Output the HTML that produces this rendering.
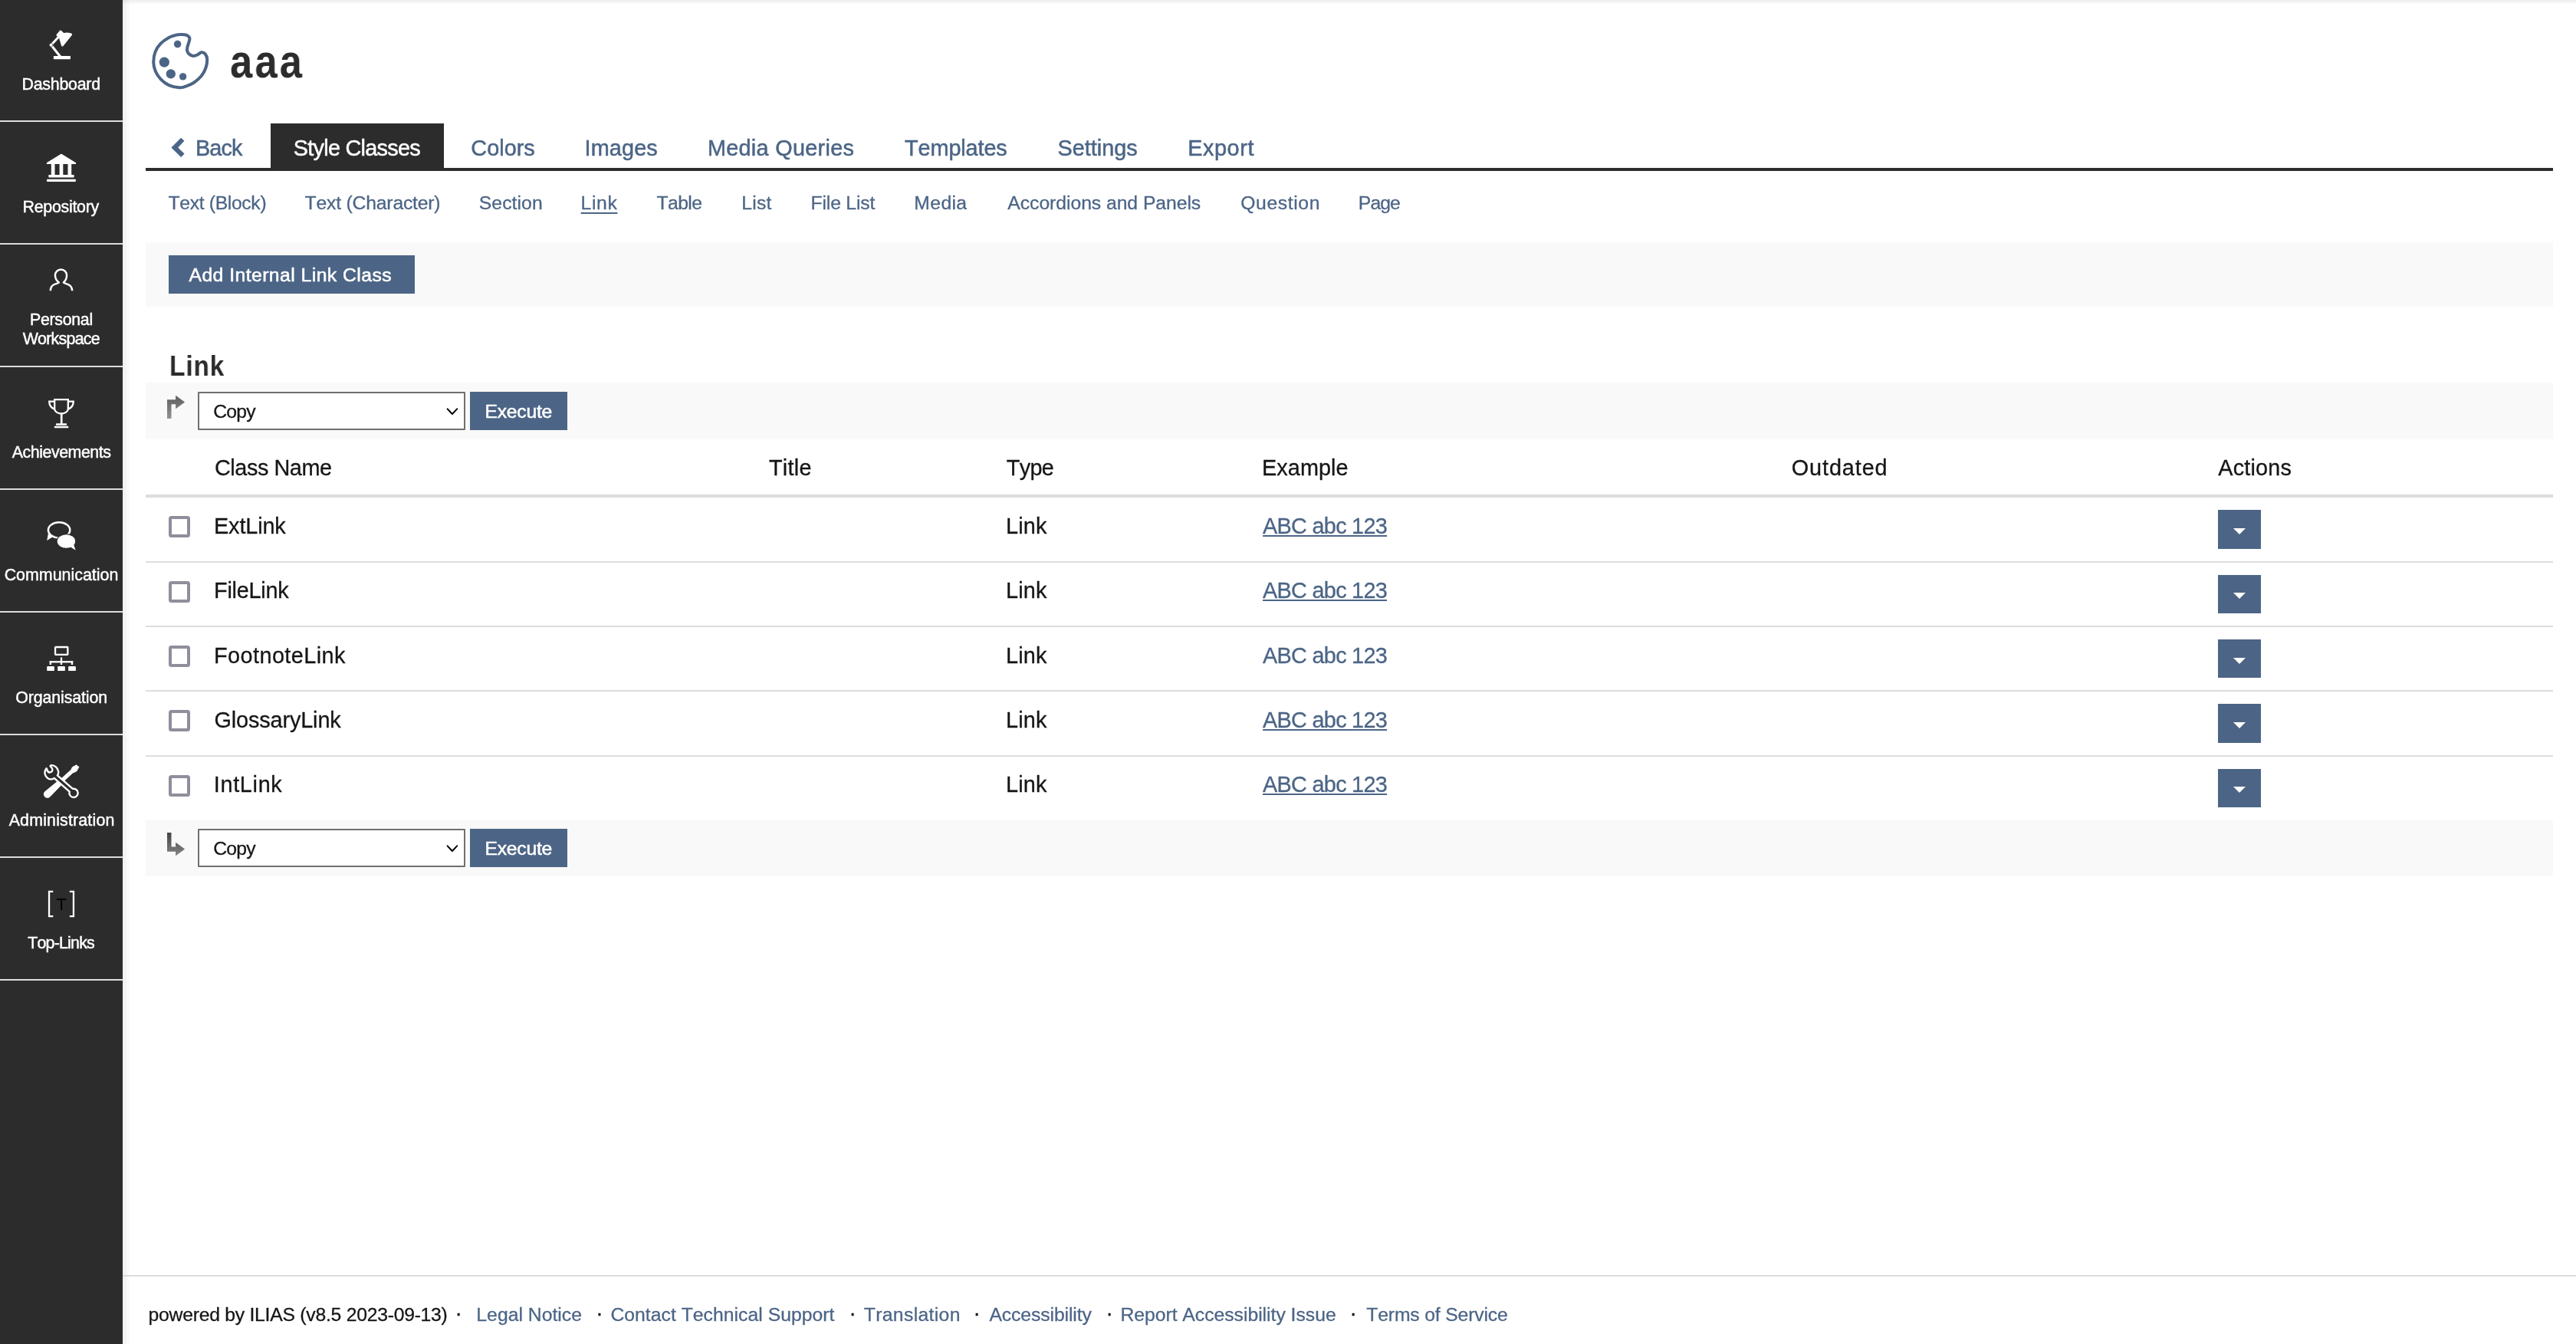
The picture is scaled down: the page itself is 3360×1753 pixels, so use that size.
<!DOCTYPE html>
<html lang="en">
<head>
<meta charset="utf-8">
<title>aaa – Style Classes – Link</title>
<style>
*{box-sizing:border-box;margin:0;padding:0}
html,body{width:3360px;height:1753px;overflow:hidden;background:#fff}
body{position:relative;font-family:"Liberation Sans",sans-serif;font-kerning:none;font-variant-ligatures:none;color:#161616}
#app{position:absolute;left:0;top:0;width:3360px;height:1753px;will-change:transform}
.t{position:absolute;white-space:pre;display:block}
a.t,a{text-decoration:none}
#mainbar{position:absolute;left:0;top:0;width:160px;height:1753px;background:#2c2c2c}
#mainbar .sep{position:absolute;left:0;width:160px;height:2px;background:#dcdcdc}
#mainbar svg{position:absolute;overflow:visible}
#sideshadow{position:absolute;left:160px;top:0;width:10px;height:1753px;background:linear-gradient(to right,rgba(0,0,0,.065),rgba(0,0,0,.03) 50%,rgba(0,0,0,0))}
#topshadow{position:absolute;left:160px;top:0;width:3200px;height:6px;background:linear-gradient(to bottom,rgba(0,0,0,.07),rgba(0,0,0,0))}
#tabline{position:absolute;left:190px;top:219px;width:3140px;height:4px;background:#2c2c2c}
#tabactive{position:absolute;left:353px;top:161px;width:226px;height:60px;background:#2c2c2c}
.graybar{position:absolute;left:190px;width:3140px;background:#f9f9f9}
.btn{position:absolute;background:#4c6586}
.sel{position:absolute;background:#fff;border:2px solid #6f6f6f;border-radius:1px}
.hline{position:absolute;left:190px;width:3140px;background:#dddddd}
.cb{position:absolute;left:220px;width:28px;height:28px;border:4px solid #8f8e9c;border-radius:3.5px;background:#fff}
.act{position:absolute;left:2893px;width:56px;height:50px;background:#4c6586}
.act i{position:absolute;left:20px;top:24px;width:0;height:0;border-left:8px solid transparent;border-right:8px solid transparent;border-top:8px solid #fff}
#footline{position:absolute;left:160px;top:1663px;width:3200px;height:2px;background:#dddddd}
svg{position:absolute;overflow:visible}
</style>
</head>
<body>
<div id="app">

<!-- ======= main bar ======= -->
<nav id="mainbar">
<div class="sep" style="top:157px"></div>
<div class="sep" style="top:317px"></div>
<div class="sep" style="top:477px"></div>
<div class="sep" style="top:637px"></div>
<div class="sep" style="top:797px"></div>
<div class="sep" style="top:957px"></div>
<div class="sep" style="top:1117px"></div>
<div class="sep" style="top:1277px"></div>
<svg width="160" height="1753" viewBox="0 0 160 1753" style="left:0;top:0" aria-hidden="true">
<g fill="#fff"><path d="M78.1 39.7L73.7 45Q73 46 73.9 46.8L77 49.4L80 59.4Q81 61.6 82.7 59.7L93.9 45.7Q94.7 44.2 93 43.6Q88 41.9 83.2 43L79.7 39.8Q78.9 39.1 78.1 39.7Z"/><path d="M66.6 58.7L76.6 48" stroke="#fff" stroke-width="3" fill="none"/><path d="M66.6 58.7L79 74.2" stroke="#fff" stroke-width="3.1" fill="none"/><circle cx="66.6" cy="58.7" r="2.3" stroke="#2c2c2c" stroke-width="0.6"/><rect x="69.8" y="73" width="22.2" height="4.3" rx="0.7"/></g>
<g fill="#fff"><path d="M79.2 200.9Q79.95 200.4 80.7 200.9L98.6 212Q99.6 212.7 99.1 213.5Q98.8 214.1 98 214.1H61.9Q61.1 214.1 60.8 213.5Q60.4 212.7 61.3 212Z"/><rect x="66.8" y="213.5" width="4.7" height="15"/><rect x="77.6" y="213.5" width="4.7" height="15"/><rect x="88.5" y="213.5" width="4.7" height="15"/><rect x="63.3" y="228" width="33.4" height="3.4" rx="0.8"/><rect x="61" y="233.7" width="37.9" height="3.4" rx="0.8"/></g>
<path d="M65.8 379.2C65.9 374.5 68 371.7 72.3 370.4C74.2 369.8 76 369.4 76.8 368.5C74.4 366.6 72 363.6 71.95 359.3A7.55 7.9 0 0 1 87.05 359.3C87 363.6 85 366.6 82.9 368.5C83.7 369.4 85.4 369.8 87.3 370.4C91.6 371.7 94 374.5 94.2 379.2" fill="none" stroke="#fff" stroke-width="2.5" stroke-linecap="butt" stroke-linejoin="round"/>
<g fill="none" stroke="#fff" stroke-width="2.3"><path d="M71.2 521.2H88.8V533.2A8.8 6.3 0 0 1 71.2 533.2Z" stroke-linejoin="miter"/><path d="M71.2 523.6H64.2C64.4 528.5 66.8 532 71 533.6"/><path d="M88.8 523.6H95.8C95.6 528.5 93.2 532 89 533.6"/></g><g fill="#fff"><rect x="78.85" y="539" width="2.7" height="14"/><rect x="72.9" y="552.2" width="14.2" height="2.5" rx="0.8"/><rect x="70.8" y="555.8" width="18.5" height="2.5" rx="0.8"/></g>
<g><path d="M62.9 696L61.2 704.9L68.5 700.5Z" fill="#fff"/><ellipse cx="77.1" cy="691.3" rx="14.2" ry="10.1" fill="#2c2c2c" stroke="#fff" stroke-width="2.5"/><path d="M96 709.8L98.5 717.6L92 713.6Z" fill="#fff" stroke="#2c2c2c" stroke-width="1"/><ellipse cx="86.4" cy="706" rx="11.7" ry="8.8" fill="#fff" stroke="#2c2c2c" stroke-width="2.4" style="paint-order:stroke"/><path d="M96 709.8L98.5 717.6L92 713.6Z" fill="#fff"/></g>
<g fill="#fff"><rect x="72.05" y="844" width="16.3" height="9.8" fill="none" stroke="#fff" stroke-width="2.3" rx="0.6"/><rect x="78.85" y="857.4" width="2.3" height="9.6"/><rect x="64.7" y="862.1" width="30.5" height="2.3"/><rect x="64.7" y="862.1" width="2.4" height="4.9"/><rect x="92.8" y="862.1" width="2.4" height="4.9"/><rect x="61.2" y="869" width="9.7" height="6.1" rx="1.2"/><rect x="75.15" y="869" width="9.7" height="6.1" rx="1.2"/><rect x="89.1" y="869" width="9.8" height="6.1" rx="1.2"/></g>
<path d="M99.5 997.8L103 1000.4L99.7 1006L94.8 1008.2L84.8 1017.4L78.65 1025.2L65.1 1039.2A4.6 4.6 0 0 1 58.6 1032.6L74.6 1019.5L81.1 1014.6L92.8 1004L94.2 1000.85Z" fill="#fff" stroke="#fff" stroke-width="0.8" stroke-linejoin="round"/><path d="M60.3 1002.4C57.4 1006.3 58 1011.4 61.4 1014.4C64.4 1017 68.2 1016.9 70.7 1015L90.77 1032.54A5.6 5.6 0 1 0 94.97 1028.9L74.9 1011.4C77.2 1008.3 76.3 1003.4 73 1000.4C71 998.6 68.6 997.9 66.7 998.2C65.3 998.4 65.5 999.5 66.4 1000.2C69.6 1002.8 68.8 1006.9 65.2 1007.4C63 1007.7 61.8 1005.8 61.2 1003.6C60.9 1002.5 60.7 1002 60.3 1002.4Z" fill="#2c2c2c" stroke="#fff" stroke-width="2.4" stroke-linejoin="round"/>
<g fill="none" stroke="#fff" stroke-width="2.3"><path d="M69.3 1162.95H64.05V1195.05H69.3"/><path d="M90.8 1162.95H95.95V1195.05H90.8"/></g>
</svg>
<span class="t" style="left:73.6px;top:1165.3px;font-size:21.8px;line-height:30px;color:#000">T</span>
<a href="#" class="t " style="left:28.47px;top:96.65px;font-size:21.40px;line-height:27px;letter-spacing:-0.251px;color:#fff;-webkit-text-stroke:0.45px #fff;">Dashboard</a>
<a href="#" class="t " style="left:29.47px;top:256.90px;font-size:21.40px;line-height:27px;letter-spacing:-0.271px;color:#fff;-webkit-text-stroke:0.45px #fff;">Repository</a>
<a href="#" class="t " style="left:38.97px;top:403.65px;font-size:21.40px;line-height:27px;letter-spacing:-0.318px;color:#fff;-webkit-text-stroke:0.45px #fff;">Personal</a>
<a href="#" class="t " style="left:29.63px;top:429.40px;font-size:21.40px;line-height:27px;letter-spacing:-0.742px;color:#fff;-webkit-text-stroke:0.45px #fff;">Workspace</a>
<a href="#" class="t " style="left:15.68px;top:576.65px;font-size:21.40px;line-height:27px;letter-spacing:-0.458px;color:#fff;-webkit-text-stroke:0.45px #fff;">Achievements</a>
<a href="#" class="t " style="left:5.64px;top:736.65px;font-size:21.40px;line-height:27px;letter-spacing:0.009px;color:#fff;-webkit-text-stroke:0.45px #fff;">Communication</a>
<a href="#" class="t " style="left:20.21px;top:896.65px;font-size:21.40px;line-height:27px;letter-spacing:-0.126px;color:#fff;-webkit-text-stroke:0.45px #fff;">Organisation</a>
<a href="#" class="t " style="left:11.68px;top:1056.65px;font-size:21.40px;line-height:27px;letter-spacing:0.165px;color:#fff;-webkit-text-stroke:0.45px #fff;">Administration</a>
<a href="#" class="t " style="left:36.24px;top:1216.65px;font-size:21.40px;line-height:27px;letter-spacing:-0.801px;color:#fff;-webkit-text-stroke:0.45px #fff;">Top-Links</a>
</nav>
<div id="sideshadow"></div>
<div id="topshadow"></div>

<!-- ======= header ======= -->
<header>
<svg width="90" height="90" viewBox="190 36 90 90" style="left:190px;top:36px" aria-hidden="true"><path d="M235.90 45.10C238.25 45.07 241.00 44.95 242.90 45.70C244.80 46.45 246.75 47.97 247.30 49.60C247.85 51.23 246.68 53.52 246.20 55.50C245.72 57.48 244.73 59.67 244.40 61.50C244.07 63.33 243.80 64.98 244.20 66.50C244.60 68.02 245.48 69.53 246.80 70.60C248.12 71.67 250.27 72.78 252.10 72.90C253.93 73.02 256.03 72.07 257.80 71.30C259.57 70.53 261.07 68.45 262.70 68.30C264.33 68.15 266.35 68.92 267.60 70.40C268.85 71.88 270.07 74.18 270.20 77.20C270.33 80.22 269.65 84.85 268.40 88.50C267.15 92.15 265.42 95.80 262.70 99.10C259.98 102.40 255.63 106.00 252.10 108.30C248.57 110.60 244.55 111.90 241.50 112.90C238.45 113.90 237.33 114.59 233.80 114.30C230.27 114.01 224.32 112.97 220.30 111.15C216.28 109.33 212.63 106.46 209.70 103.40C206.77 100.34 204.28 96.57 202.70 92.80C201.12 89.03 200.20 85.05 200.20 80.80C200.20 76.55 201.12 71.32 202.70 67.30C204.28 63.28 206.77 59.75 209.70 56.70C212.63 53.65 217.12 50.80 220.30 49.00C223.48 47.20 226.20 46.55 228.80 45.90C231.40 45.25 233.55 45.13 235.90 45.10Z" fill="none" stroke="#4c6586" stroke-width="4" stroke-linejoin="round"/><circle cx="231.60" cy="57.60" r="4.77" fill="#4c6586"/><circle cx="214.30" cy="81.10" r="6.64" fill="#4c6586"/><circle cx="222.80" cy="96.30" r="6.15" fill="#4c6586"/><circle cx="238.60" cy="99.85" r="4.70" fill="#4c6586"/></svg>
<h1><span class="t " style="left:300.21px;top:41.70px;font-size:61.00px;line-height:76px;letter-spacing:3.736px;color:#2c2c2c;font-weight:700;transform:scaleX(0.860);transform-origin:0 0;">aaa</span></h1>
</header>

<!-- ======= tabs ======= -->
<div id="tabline"></div>
<div id="tabactive"></div>
<svg width="30" height="36" viewBox="218 175 30 36" style="left:218px;top:175px" aria-hidden="true"><polygon points="236.1,179.7 240.4,183.8 232.2,192.4 240.6,200.6 236.1,204.9 223.4,192.4" fill="#4c6586"/></svg>
<div id="tabs"><a href="#" class="t " style="left:254.88px;top:175.00px;font-size:28.84px;line-height:36px;letter-spacing:-0.847px;color:#4c6586;-webkit-text-stroke:0.50px #4c6586;">Back</a>
<a href="#" class="t " style="left:382.69px;top:175.00px;font-size:28.84px;line-height:36px;letter-spacing:-0.717px;color:#fff;-webkit-text-stroke:0.50px #fff;">Style Classes</a>
<a href="#" class="t " style="left:614.29px;top:175.00px;font-size:28.84px;line-height:36px;letter-spacing:0.034px;color:#4c6586;-webkit-text-stroke:0.50px #4c6586;">Colors</a>
<a href="#" class="t " style="left:762.59px;top:175.00px;font-size:28.84px;line-height:36px;letter-spacing:0.126px;color:#4c6586;-webkit-text-stroke:0.50px #4c6586;">Images</a>
<a href="#" class="t " style="left:922.88px;top:175.00px;font-size:28.84px;line-height:36px;letter-spacing:0.301px;color:#4c6586;-webkit-text-stroke:0.50px #4c6586;">Media Queries</a>
<a href="#" class="t " style="left:1180.10px;top:175.00px;font-size:28.84px;line-height:36px;letter-spacing:-0.119px;color:#4c6586;-webkit-text-stroke:0.50px #4c6586;">Templates</a>
<a href="#" class="t " style="left:1379.44px;top:175.00px;font-size:28.84px;line-height:36px;letter-spacing:0.021px;color:#4c6586;-webkit-text-stroke:0.50px #4c6586;">Settings</a>
<a href="#" class="t " style="left:1549.13px;top:175.00px;font-size:28.84px;line-height:36px;letter-spacing:0.595px;color:#4c6586;-webkit-text-stroke:0.50px #4c6586;">Export</a></div>
<div id="subtabs"><a href="#" class="t " style="left:219.59px;top:249.00px;font-size:24.72px;line-height:31px;letter-spacing:-0.347px;color:#4c6586;-webkit-text-stroke:0.30px #4c6586;">Text (Block)</a>
<a href="#" class="t " style="left:397.59px;top:249.00px;font-size:24.72px;line-height:31px;letter-spacing:-0.194px;color:#4c6586;-webkit-text-stroke:0.30px #4c6586;">Text (Character)</a>
<a href="#" class="t " style="left:624.78px;top:249.00px;font-size:24.72px;line-height:31px;letter-spacing:0.079px;color:#4c6586;-webkit-text-stroke:0.30px #4c6586;">Section</a>
<a href="#" class="t " style="left:757.62px;top:249.00px;font-size:24.72px;line-height:31px;letter-spacing:0.614px;color:#4c6586;-webkit-text-stroke:0.30px #4c6586;text-decoration:underline;text-decoration-thickness:2px;text-underline-offset:4px;">Link</a>
<a href="#" class="t " style="left:856.59px;top:249.00px;font-size:24.72px;line-height:31px;letter-spacing:-0.621px;color:#4c6586;-webkit-text-stroke:0.30px #4c6586;">Table</a>
<a href="#" class="t " style="left:967.37px;top:249.00px;font-size:24.72px;line-height:31px;letter-spacing:0.147px;color:#4c6586;-webkit-text-stroke:0.30px #4c6586;">List</a>
<a href="#" class="t " style="left:1057.62px;top:249.00px;font-size:24.72px;line-height:31px;letter-spacing:-0.189px;color:#4c6586;-webkit-text-stroke:0.30px #4c6586;">File List</a>
<a href="#" class="t " style="left:1192.37px;top:249.00px;font-size:24.72px;line-height:31px;letter-spacing:0.350px;color:#4c6586;-webkit-text-stroke:0.30px #4c6586;">Media</a>
<a href="#" class="t " style="left:1314.35px;top:249.00px;font-size:24.72px;line-height:31px;letter-spacing:-0.048px;color:#4c6586;-webkit-text-stroke:0.30px #4c6586;">Accordions and Panels</a>
<a href="#" class="t " style="left:1618.23px;top:249.00px;font-size:24.72px;line-height:31px;letter-spacing:0.612px;color:#4c6586;-webkit-text-stroke:0.30px #4c6586;">Question</a>
<a href="#" class="t " style="left:1771.87px;top:249.00px;font-size:24.72px;line-height:31px;letter-spacing:-0.969px;color:#4c6586;-webkit-text-stroke:0.30px #4c6586;">Page</a></div>

<!-- ======= toolbar ======= -->
<div class="graybar" style="top:316px;height:84px"></div>
<div class="btn" role="button" aria-label="Add Internal Link Class" style="left:220px;top:333px;width:321px;height:50px"></div>
<span class="t " style="left:246.48px;top:343.00px;font-size:24.72px;line-height:31px;letter-spacing:0.452px;color:#fff;-webkit-text-stroke:0.55px #fff;">Add Internal Link Class</span>

<h2><span class="t " style="left:220.77px;top:453.70px;font-size:37.08px;line-height:46px;letter-spacing:0.999px;color:#2c2c2c;font-weight:700;transform:scaleX(0.900);transform-origin:0 0;">Link</span></h2>

<!-- ======= table top command row ======= -->
<div class="graybar" style="top:499px;height:74px"></div>
<svg width="30" height="40" viewBox="215 512 30 40" style="left:215px;top:512px" aria-hidden="true"><defs><linearGradient id="g1" x1="0" y1="0" x2="0" y2="1"><stop offset="0" stop-color="#5e5e5e"/><stop offset="1" stop-color="#939393"/></linearGradient></defs><polygon points="218,521.2 229.1,521.2 229.1,515.85 241.1,524.4 229.1,533.2 229.1,527.3 223.5,527.3 223.5,545.9 218,545.9" fill="url(#g1)"/></svg>
<div class="sel" role="combobox" aria-label="Action" style="left:258px;top:511px;width:349px;height:50px"></div>
<span class="t " style="left:278.14px;top:520.50px;font-size:24.72px;line-height:31px;letter-spacing:-0.735px;color:#161616;-webkit-text-stroke:0.30px #161616;">Copy</span>
<svg width="20" height="14" viewBox="580 530 20 14" style="left:580px;top:530px" aria-hidden="true"><path d="M583.66 533.35L589.9 540.04L596.16 533.35" fill="none" stroke="#000" stroke-width="2" stroke-linecap="round" stroke-linejoin="round"/></svg>
<div class="btn" role="button" aria-label="Execute" style="left:613px;top:511px;width:127px;height:50px"></div>
<span class="t " style="left:632.50px;top:520.50px;font-size:24.72px;line-height:31px;letter-spacing:-0.249px;color:#fff;-webkit-text-stroke:0.55px #fff;">Execute</span>

<!-- ======= table ======= -->
<div id="thead"><span class="t " style="left:279.94px;top:592.00px;font-size:28.84px;line-height:36px;letter-spacing:-0.429px;color:#161616;-webkit-text-stroke:0.30px #161616;">Class Name</span>
<span class="t " style="left:1002.90px;top:592.00px;font-size:28.84px;line-height:36px;letter-spacing:0.311px;color:#161616;-webkit-text-stroke:0.30px #161616;">Title</span>
<span class="t " style="left:1312.75px;top:592.00px;font-size:28.84px;line-height:36px;letter-spacing:-0.662px;color:#161616;-webkit-text-stroke:0.30px #161616;">Type</span>
<span class="t " style="left:1646.03px;top:592.00px;font-size:28.84px;line-height:36px;letter-spacing:0.065px;color:#161616;-webkit-text-stroke:0.30px #161616;">Example</span>
<span class="t " style="left:2336.78px;top:592.00px;font-size:28.84px;line-height:36px;letter-spacing:0.896px;color:#161616;-webkit-text-stroke:0.30px #161616;">Outdated</span>
<span class="t " style="left:2893.34px;top:592.00px;font-size:28.84px;line-height:36px;letter-spacing:0.162px;color:#161616;-webkit-text-stroke:0.30px #161616;">Actions</span></div>
<div class="hline" style="top:645px;height:4px"></div>
<div class="row" role="row">
<div class="cb" role="checkbox" aria-checked="false" style="top:673.00px"></div>
<span class="t " style="left:279.03px;top:668.25px;font-size:28.84px;line-height:36px;letter-spacing:-0.134px;color:#161616;-webkit-text-stroke:0.30px #161616;">ExtLink</span>
<span class="t " style="left:1312.03px;top:668.25px;font-size:28.84px;line-height:36px;letter-spacing:0.206px;color:#161616;-webkit-text-stroke:0.30px #161616;">Link</span>
<a href="#" class="t " style="left:1647.09px;top:668.25px;font-size:28.84px;line-height:36px;letter-spacing:-0.717px;color:#4c6586;-webkit-text-stroke:0.30px #4c6586;text-decoration:underline;text-decoration-thickness:1.5px;text-underline-offset:2px;">ABC abc 123</a>
<div class="act" role="button" aria-label="Actions" style="top:665px;height:51px"><i style="top:24px"></i></div>
<div class="hline" style="top:732.00px;height:2px"></div>
</div>
<div class="row" role="row">
<div class="cb" role="checkbox" aria-checked="false" style="top:758.00px"></div>
<span class="t " style="left:279.03px;top:752.40px;font-size:28.84px;line-height:36px;letter-spacing:-0.229px;color:#161616;-webkit-text-stroke:0.30px #161616;">FileLink</span>
<span class="t " style="left:1312.03px;top:752.40px;font-size:28.84px;line-height:36px;letter-spacing:0.206px;color:#161616;-webkit-text-stroke:0.30px #161616;">Link</span>
<a href="#" class="t " style="left:1647.09px;top:752.40px;font-size:28.84px;line-height:36px;letter-spacing:-0.717px;color:#4c6586;-webkit-text-stroke:0.30px #4c6586;text-decoration:underline;text-decoration-thickness:1.5px;text-underline-offset:2px;">ABC abc 123</a>
<div class="act" role="button" aria-label="Actions" style="top:750px;height:50px"><i style="top:23px"></i></div>
<div class="hline" style="top:816.00px;height:2px"></div>
</div>
<div class="row" role="row">
<div class="cb" role="checkbox" aria-checked="false" style="top:842.00px"></div>
<span class="t " style="left:279.03px;top:836.60px;font-size:28.84px;line-height:36px;letter-spacing:0.434px;color:#161616;-webkit-text-stroke:0.30px #161616;">FootnoteLink</span>
<span class="t " style="left:1312.03px;top:836.60px;font-size:28.84px;line-height:36px;letter-spacing:0.206px;color:#161616;-webkit-text-stroke:0.30px #161616;">Link</span>
<a href="#" class="t " style="left:1647.09px;top:836.60px;font-size:28.84px;line-height:36px;letter-spacing:-0.717px;color:#4c6586;-webkit-text-stroke:0.30px #4c6586;">ABC abc 123</a>
<div class="act" role="button" aria-label="Actions" style="top:834px;height:50px"><i style="top:24px"></i></div>
<div class="hline" style="top:900.00px;height:2px"></div>
</div>
<div class="row" role="row">
<div class="cb" role="checkbox" aria-checked="false" style="top:926.00px"></div>
<span class="t " style="left:279.45px;top:920.80px;font-size:28.84px;line-height:36px;letter-spacing:-0.121px;color:#161616;-webkit-text-stroke:0.30px #161616;">GlossaryLink</span>
<span class="t " style="left:1312.03px;top:920.80px;font-size:28.84px;line-height:36px;letter-spacing:0.206px;color:#161616;-webkit-text-stroke:0.30px #161616;">Link</span>
<a href="#" class="t " style="left:1647.09px;top:920.80px;font-size:28.84px;line-height:36px;letter-spacing:-0.717px;color:#4c6586;-webkit-text-stroke:0.30px #4c6586;text-decoration:underline;text-decoration-thickness:1.5px;text-underline-offset:2px;">ABC abc 123</a>
<div class="act" role="button" aria-label="Actions" style="top:918px;height:51px"><i style="top:24px"></i></div>
<div class="hline" style="top:985.00px;height:2px"></div>
</div>
<div class="row" role="row">
<div class="cb" role="checkbox" aria-checked="false" style="top:1011.00px"></div>
<span class="t " style="left:278.74px;top:1005.00px;font-size:28.84px;line-height:36px;letter-spacing:0.683px;color:#161616;-webkit-text-stroke:0.30px #161616;">IntLink</span>
<span class="t " style="left:1312.03px;top:1005.00px;font-size:28.84px;line-height:36px;letter-spacing:0.206px;color:#161616;-webkit-text-stroke:0.30px #161616;">Link</span>
<a href="#" class="t " style="left:1647.09px;top:1005.00px;font-size:28.84px;line-height:36px;letter-spacing:-0.717px;color:#4c6586;-webkit-text-stroke:0.30px #4c6586;text-decoration:underline;text-decoration-thickness:1.5px;text-underline-offset:2px;">ABC abc 123</a>
<div class="act" role="button" aria-label="Actions" style="top:1003px;height:50px"><i style="top:23px"></i></div>
</div>

<!-- ======= table bottom command row ======= -->
<div class="graybar" style="top:1069px;height:74px"></div>
<svg width="30" height="40" viewBox="215 1082 30 40" style="left:215px;top:1082px" aria-hidden="true"><defs><linearGradient id="g2" x1="0" y1="0" x2="0" y2="1"><stop offset="0" stop-color="#444"/><stop offset="1" stop-color="#858585"/></linearGradient></defs><polygon points="218,1086 223.5,1086 223.5,1104.5 229.1,1104.5 229.1,1098.8 241.1,1107.6 229.1,1116.2 229.1,1110.65 218,1110.65" fill="url(#g2)"/></svg>
<div class="sel" role="combobox" aria-label="Action" style="left:258px;top:1081px;width:349px;height:50px"></div>
<span class="t " style="left:278.14px;top:1090.75px;font-size:24.72px;line-height:31px;letter-spacing:-0.735px;color:#161616;-webkit-text-stroke:0.30px #161616;">Copy</span>
<svg width="20" height="14" viewBox="580 1100 20 14" style="left:580px;top:1100px" aria-hidden="true"><path d="M583.66 1103.35L589.9 1110.04L596.16 1103.35" fill="none" stroke="#000" stroke-width="2" stroke-linecap="round" stroke-linejoin="round"/></svg>
<div class="btn" role="button" aria-label="Execute" style="left:613px;top:1081px;width:127px;height:50px"></div>
<span class="t " style="left:632.50px;top:1090.75px;font-size:24.72px;line-height:31px;letter-spacing:-0.249px;color:#fff;-webkit-text-stroke:0.55px #fff;">Execute</span>

<!-- ======= footer ======= -->
<div id="footline"></div>
<footer><span class="t " style="left:193.56px;top:1698.50px;font-size:24.72px;line-height:31px;letter-spacing:-0.248px;color:#161616;-webkit-text-stroke:0.30px #161616;">powered by ILIAS (v8.5 2023-09-13)</span>
<a href="#" class="t " style="left:621.37px;top:1698.50px;font-size:24.72px;line-height:31px;letter-spacing:0.014px;color:#4c6586;-webkit-text-stroke:0.30px #4c6586;">Legal Notice</a>
<a href="#" class="t " style="left:796.39px;top:1698.50px;font-size:24.72px;line-height:31px;letter-spacing:0.030px;color:#4c6586;-webkit-text-stroke:0.30px #4c6586;">Contact Technical Support</a>
<a href="#" class="t " style="left:1126.79px;top:1698.50px;font-size:24.72px;line-height:31px;letter-spacing:0.338px;color:#4c6586;-webkit-text-stroke:0.30px #4c6586;">Translation</a>
<a href="#" class="t " style="left:1290.40px;top:1698.50px;font-size:24.72px;line-height:31px;letter-spacing:-0.094px;color:#4c6586;-webkit-text-stroke:0.30px #4c6586;">Accessibility</a>
<a href="#" class="t " style="left:1461.42px;top:1698.50px;font-size:24.72px;line-height:31px;letter-spacing:-0.016px;color:#4c6586;-webkit-text-stroke:0.30px #4c6586;">Report Accessibility Issue</a>
<a href="#" class="t " style="left:1782.29px;top:1698.50px;font-size:24.72px;line-height:31px;letter-spacing:-0.157px;color:#4c6586;-webkit-text-stroke:0.30px #4c6586;">Terms of Service</a>
<span class="t " style="left:593.50px;top:1695.10px;font-size:28.00px;line-height:35px;letter-spacing:0.000px;color:#161616;-webkit-text-stroke:0.30px #161616;">·</span>
<span class="t " style="left:777.25px;top:1695.10px;font-size:28.00px;line-height:35px;letter-spacing:0.000px;color:#161616;-webkit-text-stroke:0.30px #161616;">·</span>
<span class="t " style="left:1107.40px;top:1695.10px;font-size:28.00px;line-height:35px;letter-spacing:0.000px;color:#161616;-webkit-text-stroke:0.30px #161616;">·</span>
<span class="t " style="left:1269.50px;top:1695.10px;font-size:28.00px;line-height:35px;letter-spacing:0.000px;color:#161616;-webkit-text-stroke:0.30px #161616;">·</span>
<span class="t " style="left:1442.50px;top:1695.10px;font-size:28.00px;line-height:35px;letter-spacing:0.000px;color:#161616;-webkit-text-stroke:0.30px #161616;">·</span>
<span class="t " style="left:1760.50px;top:1695.10px;font-size:28.00px;line-height:35px;letter-spacing:0.000px;color:#161616;-webkit-text-stroke:0.30px #161616;">·</span></footer>

</div>
</body>
</html>
